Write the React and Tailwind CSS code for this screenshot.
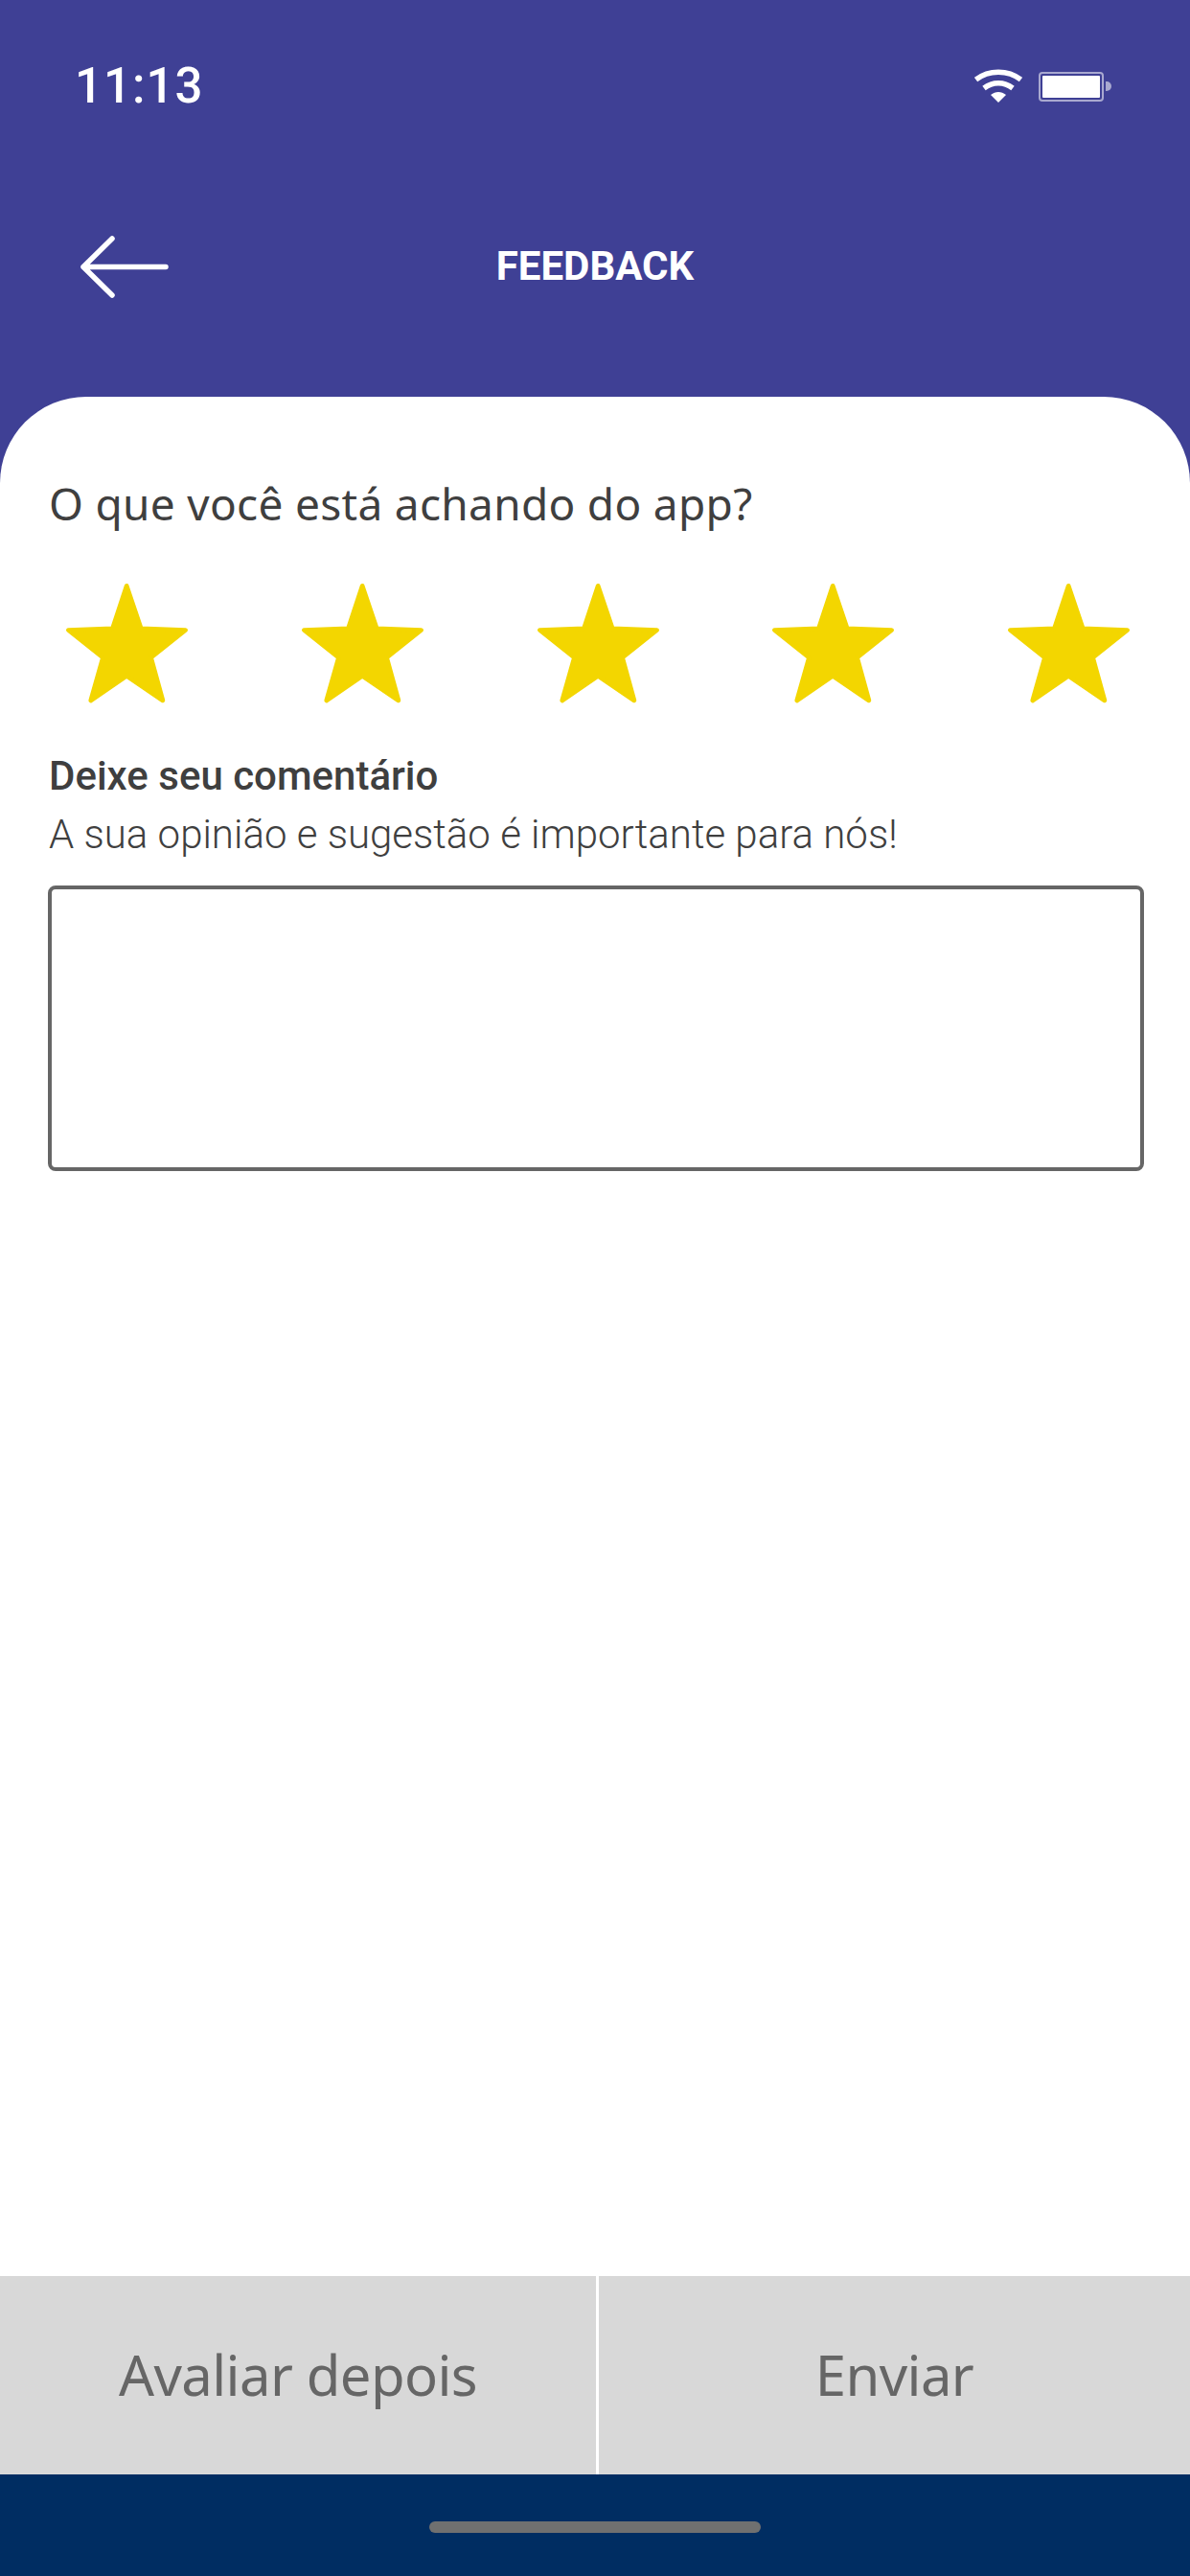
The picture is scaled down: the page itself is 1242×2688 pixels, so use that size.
import React from "react";

function Star() {
  return (
    <svg viewBox="204 325 386 380" className="w-[129px] h-[127px] shrink-0">
      <polygon
        points="396,335 441,468 580,473 472,559 509,693 396,616 284,693 322,559 214,473 352,468"
        fill="#f3d600"
        stroke="#f3d600"
        strokeWidth="14"
        strokeLinejoin="round"
      />
    </svg>
  );
}

export default function App() {
  return (
    <div className="w-[1242px] h-[2688px] flex flex-col bg-[#3f4095] overflow-hidden font-['Roboto',sans-serif]">
      <div className="h-[170px] shrink-0 flex items-start justify-between pl-[78px] pr-[82px] pt-[60px]">
        <span className="text-[51px] leading-[60px] font-medium text-white tracking-[1px]">11:13</span>
        <div className="flex items-center gap-[17px] pt-[12px]">
          <svg viewBox="0 0 50 36" className="w-[50px] h-[36px]">
            <path d="M1.500 11 C15 0.500 35 0.500 48.500 11" fill="none" stroke="white" strokeWidth="5.5" />
            <path d="M10 20 C19 13 31 13 40 20" fill="none" stroke="white" strokeWidth="5.5" />
            <path d="M17 27 C22 23 28 23 33 27 L25 35 Z" fill="white" />
          </svg>
          <div className="flex items-center gap-[2px]">
            <div className="w-[68px] h-[31px] rounded-[4px] border-[2px] border-[#a9a9d0] p-[2px]">
              <div className="w-full h-full bg-white rounded-[1px]" />
            </div>
            <div className="w-[6px] h-[10px] bg-[#a9a9d0] rounded-r-full" />
          </div>
        </div>
      </div>

      <div className="h-[244px] shrink-0 relative flex items-start justify-center pt-[84px]">
        <svg viewBox="0 0 96 68" className="absolute left-[83px] top-[75px] w-[96px] h-[68px]">
          <path d="M34 4 L4 33.500 L34 63 M4 33.500 L90 33.500" fill="none" stroke="white" strokeWidth="5.500" strokeLinecap="round" strokeLinejoin="round" />
        </svg>
        <span className="text-[42px] leading-[48px] font-bold text-white">FEEDBACK</span>
      </div>

      <div className="flex-1 flex flex-col bg-white rounded-t-[90px] min-h-0">
        <div className="flex-1 flex flex-col">
          <h1 className="mt-[84px] px-[51px] text-[46px] leading-[54px] font-normal text-[#3f3f3f] tracking-[0.3px] font-['Noto_Sans',sans-serif]">
            O que você está achando do app?
          </h1>
          <div className="mt-[56px] pl-[68px] pr-[62px] flex justify-between">
            <Star />
            <Star />
            <Star />
            <Star />
            <Star />
          </div>
          <h2 className="mt-[51px] px-[51px] text-[42px] leading-[48px] font-medium text-[#3f3f3f]">
            Deixe seu comentário
          </h2>
          <p className="mt-[12px] px-[51px] text-[42px] leading-[50px] font-light text-[#3f3f3f]">
            A sua opinião e sugestão é importante para nós!
          </p>
          <div className="mt-[28px] mx-[50px] w-[1144px] h-[298px] rounded-[8px] border-[4px] border-[#666666] bg-white" />
        </div>

        <div className="h-[207px] shrink-0 flex gap-[3px]">
          <button className="w-[622px] pb-[3px] bg-[#d8d8d8] text-[#666666] text-[58px] font-normal font-['Noto_Sans',sans-serif] tracking-[-0.6px]">Avaliar depois</button>
          <button className="flex-1 pb-[3px] bg-[#d8d8d8] text-[#666666] text-[58px] font-normal font-['Noto_Sans',sans-serif] tracking-[-0.6px]">Enviar</button>
        </div>
        <div className="h-[106px] shrink-0 bg-[#002d62] flex justify-center pt-[49px]">
          <div className="w-[346px] h-[12px] rounded-[6px] bg-[#707070]" />
        </div>
      </div>
    </div>
  );
}
